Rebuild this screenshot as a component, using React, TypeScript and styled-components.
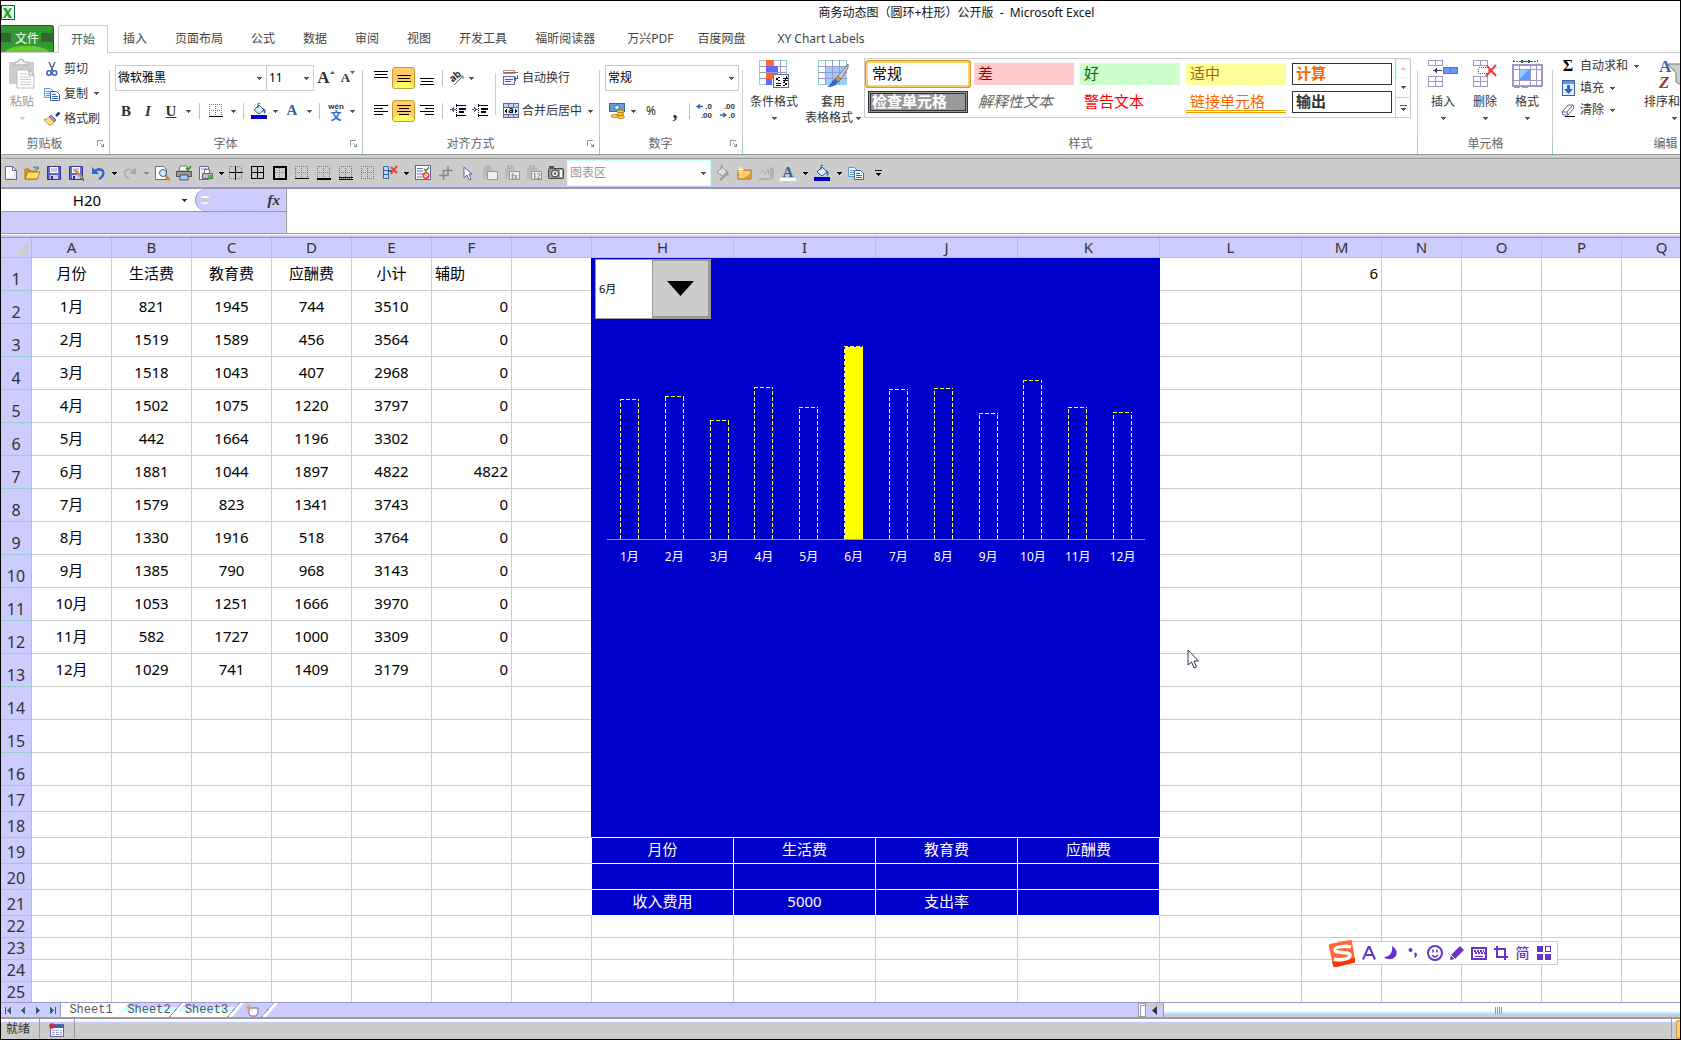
import React from 'react';
import styled, { createGlobalStyle, css } from 'styled-components';

const GlobalStyle = createGlobalStyle`
  *, *::before, *::after { box-sizing: border-box; }
  html, body { margin: 0; padding: 0; }
  body {
    background: #fff;
    font-family: "Noto Sans", "Noto Sans CJK SC", sans-serif;
    font-size: 12px;
    line-height: 16px;
    color: #333;
    overflow: hidden;
  }
  button, input, select, textarea { font: inherit; color: inherit; margin: 0; border-radius: 0; outline: 0; }
  button { background: none; border: 0; padding: 0; white-space: nowrap; cursor: default; }
  svg { display: block; flex: none; overflow: visible; }
`;

/* ---------- window frame ---------- */

const Window = styled.div`
  display: flex;
  flex-direction: column;
  height: 100vh;
  border: 1px solid #000;
  overflow: hidden;
`;

const TitleBar = styled.header`
  flex: none;
  display: grid;
  grid-template-columns: 16px 1fr 16px;
  align-items: center;
  height: 24px;
`;

const Title = styled.h1`
  margin: 0 0 0 232px;
  font-size: 12px;
  font-weight: 400;
  color: #111;
  text-align: center;
  white-space: pre;
`;

const TabStrip = styled.nav`
  flex: none;
  display: flex;
  height: 28px;
  border-bottom: 1px solid #ccc;
`;

const FileTab = styled.button`
  width: 53px;
  margin-right: 4px;
  color: #fff;
  border: 1px solid #063;
  border-width: 1px 1px 0 0;
  border-radius: 0 3px 0 0;
  background:
    radial-gradient(ellipse 60% 40% at 50% 105%, #6c3 0 70%, transparent 75%),
    linear-gradient(90deg, #363 0 10px, transparent 10px 40px, #363 40px) 0 7px / 100% 9px no-repeat,
    #393;
`;

const RibbonTab = styled.button<{ $active?: boolean; $latin?: boolean }>`
  padding: ${p => (p.$latin ? '0 10px 0 18px' : '0 14px')};
  color: #444;
  ${p => p.$active && css`
    height: 28px;
    padding: 0 12px;
    margin-right: 1px;
    border: 1px solid #ccc;
    border-bottom: 0;
    border-radius: 3px 3px 0 0;
    background: #fff;
    color: #366;
  `}
`;

/* ---------- ribbon ---------- */

const Ribbon = styled.div`
  flex: none;
  display: flex;
  height: 101px;
  overflow: hidden;
`;

const Group = styled.section<{ $w: number }>`
  flex: none;
  display: flex;
  flex-direction: column;
  width: ${p => p.$w}px;
  background: linear-gradient(#ccc 60px, #9cc) right bottom / 1px 84px no-repeat;
`;

const GroupBody = styled.div<{ $left?: number }>`
  flex: 1;
  display: flex;
  align-items: flex-start;
  padding-left: ${p => p.$left ?? 0}px;
`;

const GroupFooter = styled.div`
  display: flex;
  align-items: center;
  height: 20px;
  color: #666;
`;

const GroupName = styled.span`
  flex: 1;
  text-align: center;
`;

const Launcher = styled.button`
  width: 22px;
  padding-left: 9px;
`;

const Rows = styled.div<{ $w?: number; $left?: number }>`
  display: flex;
  flex-direction: column;
  gap: 7px;
  padding-top: 12px;
  padding-left: ${p => p.$left ?? 0}px;
  width: ${p => (p.$w ? p.$w + 'px' : 'auto')};
`;

const Row = styled.div`
  display: flex;
  align-items: center;
  height: 26px;
`;

const Slot = styled.button<{ $w?: number; $on?: boolean }>`
  flex: none;
  display: flex;
  align-items: center;
  justify-content: center;
  width: ${p => p.$w ?? 22}px;
  height: 22px;
  ${p => p.$on && css`
    border: 1px solid #c93;
    border-radius: 3px;
    background: radial-gradient(ellipse 60% 40% at 50% 100%, #ff6 0 70%, #fc6 100%);
  `}
`;

const Serif = styled.span<{ $size: number; $color?: string }>`
  font-family: "Liberation Serif", serif;
  font-size: ${p => p.$size}px;
  font-weight: 700;
  color: ${p => p.$color ?? '#333'};
`;

const Divider = styled.span<{ $w: number }>`
  flex: none;
  width: ${p => p.$w}px;
  height: 16px;
  background: linear-gradient(#ccc, #9cc) center / 1px 100% no-repeat;
`;

const TallDivider = styled.span`
  flex: none;
  align-self: center;
  width: 1px;
  height: 42px;
  background: #ccc;
`;

const LabelButton = styled.button`
  display: flex;
  align-items: center;
  gap: 3px;
`;

const MenuMark = styled.span`
  padding-left: 3px;
`;

const BigButton = styled.button<{ $w: number; $muted?: boolean }>`
  flex: none;
  display: flex;
  flex-direction: column;
  align-items: center;
  width: ${p => p.$w}px;
  padding-top: 6px;
  color: ${p => (p.$muted ? '#999' : '#333')};
`;

const BigLabel = styled.span`
  margin-top: 5px;
  height: 16px;
`;

const BigFoot = styled.span`
  display: flex;
  align-items: center;
  gap: 3px;
  height: 16px;
`;

const Commands = styled.div<{ $row: number; $top: number; $w?: number }>`
  display: flex;
  flex-direction: column;
  padding-top: ${p => p.$top}px;
  width: ${p => (p.$w ? p.$w + 'px' : 'auto')};
  ${LabelButton} { height: ${p => p.$row}px; }
`;

const IconCell = styled.span`
  display: flex;
  justify-content: center;
  width: 18px;
`;

const Combo = styled.label<{ $w: number; $flat?: boolean }>`
  display: grid;
  flex: none;
  align-items: center;
  width: ${p => p.$w}px;
  height: 26px;
  border: 1px solid ${p => (p.$flat ? '#cff' : '#ccc')};
  background: #fff;
  color: ${p => (p.$flat ? '#999' : '#000')};
  & + & { border-left: 0; }
  > * { grid-area: 1 / 1; }
  > svg { justify-self: end; margin-right: 4px; pointer-events: none; }
`;

const ComboSelect = styled.select`
  width: 100%;
  height: 100%;
  padding: 0 2px;
  border: 0;
  background: transparent;
  appearance: none;
`;

const Gallery = styled.div`
  display: flex;
  height: 60px;
  margin: 5px 0 0 3px;
  border: 1px solid #ccc;
`;

const Chips = styled.div`
  display: grid;
  grid-template-columns: repeat(5, 100px);
  grid-auto-rows: 22px;
  gap: 6px;
  padding: 4px 3px;
`;

const Chip = styled.button<{ $bg?: string; $fg?: string; $kind?: string }>`
  padding: 0 4px 3px;
  font-size: 15px;
  line-height: 18px;
  text-align: left;
  background: ${p => p.$bg ?? '#fff'};
  color: ${p => p.$fg ?? '#000'};
  ${p => p.$kind === 'selected' && css`
    border-radius: 1px;
    box-shadow: 0 0 0 2px #fc6, 0 0 0 3px #c93;
  `}
  ${p => p.$kind === 'check' && css`
    padding: 0 1px 3px;
    border: 3px double #333;
    font-weight: 700;
    line-height: 12px;
  `}
  ${p => p.$kind === 'note' && css`font-style: italic;`}
  ${p => p.$kind === 'link' && css`
    padding-bottom: 0;
    border-bottom: 3px double #f90;
  `}
  ${p => p.$kind === 'boxed' && css`
    padding: 0 3px 3px;
    border: 1px solid #333;
    font-weight: 700;
    line-height: 16px;
  `}
`;

const GallerySteps = styled.div`
  display: grid;
  grid-template-rows: repeat(3, 1fr);
  width: 15px;
  border-left: 1px solid #ccc;
`;

const GalleryStep = styled.button<{ $dim?: boolean }>`
  display: grid;
  place-items: center;
  border: 1px solid ${p => (p.$dim ? '#cff' : 'transparent')};
  border-bottom-color: ${p => (p.$dim ? '#cff' : '#ccc')};
  &:last-child { border-bottom: 0; }
`;

const RibbonEdge = styled.div`
  flex: none;
  height: 5px;
  border: solid #999;
  border-width: 1px 0;
  background: linear-gradient(#ccf 1px, #ccc 1px);
`;

/* ---------- quick access bar ---------- */

const QuickBar = styled.div`
  flex: none;
  display: flex;
  align-items: center;
  height: 30px;
  border-bottom: 2px solid #999;
  background: #ccc;
  box-shadow: inset 0 1px #ccf, inset 0 -1px #ccf;
`;

/* ---------- formula bar ---------- */

const FormulaBar = styled.div`
  flex: none;
  display: grid;
  grid-template-columns: 286px 1fr;
  height: 45px;
  border-bottom: 1px solid #999;
`;

const NameArea = styled.div`
  border-right: 1px solid #999;
  background: #ccf;
`;

const NameRow = styled.div`
  display: flex;
  align-items: center;
  height: 23px;
  border-bottom: 1px solid #999;
  background: #fff;
`;

const NameInput = styled.input`
  width: 172px;
  height: 22px;
  padding: 0;
  border: 0;
  background: transparent;
  font-size: 15px;
  text-align: center;
  color: #000;
`;

const FxArea = styled.div`
  flex: 1;
  display: flex;
  align-items: center;
  justify-content: space-between;
  height: 22px;
  padding: 0 6px 0 5px;
  border-left: 1px solid #999;
  border-radius: 11px 0 0 11px;
  background: #ccf;
`;

const FxKnob = styled.span`
  width: 8px;
  height: 8px;
  border-radius: 2px;
  background: linear-gradient(#fff 2px, #ccc 2px 6px, #eef 6px);
`;

const FxButton = styled.button`
  font-family: "Liberation Serif", serif;
  font-size: 15px;
  font-style: italic;
  font-weight: 700;
`;

const FormulaInput = styled.textarea`
  width: 100%;
  height: 100%;
  padding: 2px 4px;
  border: 0;
  resize: none;
  background: #fff;
  font-size: 15px;
`;

const SheetEdge = styled.div`
  flex: none;
  height: 4px;
  border-top: 1px solid #fff;
  border-bottom: 1px solid #999;
  background: #ccf;
`;

/* ---------- worksheet ---------- */

const SheetPane = styled.main`
  position: relative;
  flex: 1;
  min-height: 0;
  overflow: hidden;
  background: #fff;
`;

const Grid = styled.table`
  width: 1701px;
  table-layout: fixed;
  border-collapse: separate;
  border-spacing: 0;
`;

const ColHead = styled.th`
  height: 20px;
  padding: 0 0 1px;
  border-right: 1px solid #9cc;
  border-bottom: 1px solid #9cc;
  background: #ccf;
  font-size: 15px;
  line-height: 18px;
  font-weight: 400;
`;

const Corner = styled(ColHead)`
  background: linear-gradient(135deg, transparent 50%, #ccc 50%) 15px 5px / 12px 12px no-repeat, #ccf;
`;

const RowHead = styled.th`
  padding: 0 0 1px;
  border-right: 1px solid #9cc;
  border-bottom: 1px solid #9cc;
  background: #ccf;
  vertical-align: bottom;
  font-size: 16px;
  line-height: 20px;
  font-weight: 400;
`;

const Cell = styled.td<{ $h: number; $align: string; $fill: boolean; $below: string; $beside: string }>`
  height: ${p => p.$h}px;
  padding: 0 3px 2px;
  border-right: 1px solid ${p => p.$beside};
  border-bottom: 1px solid ${p => p.$below};
  background: ${p => (p.$fill ? '#00c' : '#fff')};
  color: ${p => (p.$fill ? '#fff' : '#000')};
  font-size: 15px;
  line-height: 19px;
  text-align: ${p => p.$align};
  vertical-align: middle;
  white-space: nowrap;
`;

/* The chart object floats over columns H to K. */
const ChartObject = styled.section`
  position: absolute;
  left: 590px;
  top: 20px;
  width: 569px;
  height: 579px;
  padding-top: 1px;
  background: #00c;
  color: #fff;
`;

const MonthPicker = styled.label`
  display: grid;
  grid-template-columns: 1fr 58px;
  width: 116px;
  height: 60px;
  margin-left: 4px;
  border: 1px solid #999;
  background: #fff;
`;

const MonthSelect = styled.select`
  grid-area: 1 / 1 / 2 / 3;
  padding: 0 3px;
  border: 0;
  background: transparent;
  color: #000;
  font-size: 11px;
  appearance: none;
`;

const MonthArrow = styled.span`
  grid-area: 1 / 2;
  display: grid;
  place-items: center;
  border: 1px solid #999;
  border-right-width: 2px;
  border-bottom-width: 2px;
  background: #ccc;
  pointer-events: none;
`;

const Plot = styled.div`
  display: grid;
  grid-template-columns: repeat(12, 1fr);
  align-items: end;
  justify-items: center;
  height: 221px;
  margin: 0 15px 0 16px;
  border-bottom: 1px solid #999;
`;

const Bar = styled.div<{ $solid: boolean }>`
  width: 19px;
  background:
    ${p => p.$solid && 'linear-gradient(#ff0, #ff0) 1px 1px / 100% 100% no-repeat,'}
    repeating-linear-gradient(90deg, #ff3 0 4px, transparent 4px 6px) 0 0 / 100% 1px no-repeat,
    repeating-linear-gradient(0deg, #ff9 0 4px, transparent 4px 6px) 0 0 / 1px 100% no-repeat,
    repeating-linear-gradient(0deg, #ff6 0 4px, transparent 4px 6px) 100% 0 / 1px 100% no-repeat;
`;

const PlotLabels = styled.div`
  display: grid;
  grid-template-columns: repeat(12, 1fr);
  margin: 8px 15px 0 16px;
  line-height: 18px;
  text-align: center;
`;

const ImeBar = styled.div`
  position: absolute;
  right: 122px;
  bottom: 37px;
  display: flex;
  align-items: center;
  height: 24px;
  padding-right: 2px;
  border: 1px solid #ccc;
  background: #fff;
  color: #63c;
`;

const ImeLogo = styled.span`
  margin: 0 2px 0 -11px;
`;

const ImeText = styled.span`
  font-size: 14px;
  font-weight: 500;
`;

const Pointer = styled.span`
  position: absolute;
  left: 1186px;
  top: 411px;
`;

/* ---------- sheet tabs and status ---------- */

const BottomBar = styled.div`
  flex: none;
  display: grid;
  grid-template-columns: minmax(0, 1fr) 542px;
  height: 16px;
  border-top: 1px solid #99c;
  border-bottom: 1px solid #99c;
  background: #ccf;
`;

const SheetTabs = styled.div`
  display: flex;
`;

const SheetNav = styled.div`
  display: flex;
  align-items: center;
  width: 60px;
  border-right: 1px solid #99c;
`;

const NavButton = styled.button`
  display: grid;
  place-items: center;
  width: 15px;
`;

const slantedEdge = `linear-gradient(131deg,
  transparent calc(100% - 13px),
  #99c calc(100% - 13px) calc(100% - 12px),
  #fff calc(100% - 12px))`;

const SheetTab = styled.button<{ $active?: boolean; $w: number }>`
  flex: none;
  width: ${p => p.$w}px;
  height: 14px;
  padding: ${p => (p.$active ? '1px 8px 0 0' : '1px 5px 0 0')};
  margin-left: ${p => (p.$active ? 0 : -12)}px;
  clip-path: ${p => p.$active
    ? 'polygon(0 0, 100% 0, calc(100% - 12px) 100%, 0 100%)'
    : 'polygon(12px 0, 100% 0, calc(100% - 12px) 100%, 0 100%)'};
  background: ${p => p.$active
    ? '#fff'
    : `${slantedEdge}, linear-gradient(#ccf 4px, #cff 4px 8px, #fff 9px)`};
  font-family: "Liberation Mono", monospace;
  font-size: 12px;
  line-height: 13px;
  color: #555;
`;

const NewTab = styled.button`
  display: flex;
  align-items: center;
  justify-content: center;
  width: 46px;
  margin-left: -12px;
  padding-right: 6px;
  clip-path: polygon(12px 0, 100% 0, calc(100% - 12px) 100%, 0 100%);
  background: ${slantedEdge};
`;

const HScroll = styled.div`
  display: flex;
`;

const Splitter = styled.span`
  width: 8px;
  border: 1px solid #999;
  background: #fff;
  box-shadow: inset 1px 1px #fff, inset 2px 2px #99c;
`;

const ScrollArrow = styled.button`
  display: grid;
  place-items: center;
  width: 17px;
  background: linear-gradient(#ccc 4px, #ccf 4px);
`;

const ScrollThumb = styled.div`
  flex: 1;
  display: flex;
  align-items: center;
  justify-content: flex-end;
  padding-right: 178px;
  border-left: 1px solid #999;
  background: linear-gradient(#fff 8px, #cff 8px 10px, #ccf 10px 12px, #ccc 12px);
`;

const ScrollGrip = styled.span`
  width: 7px;
  height: 7px;
  background: repeating-linear-gradient(90deg, #999 0 1px, transparent 1px 2px);
`;

const StatusBar = styled.footer`
  flex: none;
  display: flex;
  align-items: stretch;
  height: 21px;
  border-top: 1px solid #999;
  background: linear-gradient(#fff 2px, #cff 2px 3px, #ccf 3px 4px, #ccc 4px);
`;

const StatusText = styled.span`
  padding: 2px 9px 0 5px;
  border-right: 1px solid #999;
`;

const StatusButton = styled.button`
  padding: 2px 9px 0;
  border-right: 1px solid #999;
`;

const StatusEnd = styled.div`
  display: flex;
  margin-left: auto;
  border-left: 1px solid #999;
  padding: 1px 0 0 4px;
`;

const ViewButton = styled.button`
  width: 4px;
  border: solid #c93;
  border-width: 1px 0 1px 1px;
  border-radius: 3px 0 0 3px;
  background: #fc6;
`;

/* ---------- icons ---------- */

type IconProps = { w?: number; h?: number; sharp?: boolean; children: React.ReactNode };
const Icon = ({ w = 16, h = 16, sharp, children }: IconProps) => (
  <svg width={w} height={h} viewBox={`0 0 ${w} ${h}`} fill="none" aria-hidden="true"
    shapeRendering={sharp ? 'crispEdges' : undefined}>{children}</svg>
);

const Caret = ({ color = '#555' }: { color?: string }) => (
  <Icon w={5} h={3} sharp><path d="M0 0h5v1H4v1H3v1H2V2H1V1H0z" fill={color} /></Icon>
);

const ExcelIcon = () => (
  <Icon w={15} h={16}>
    <rect x="0.5" y="0.5" width="13" height="14" fill="#efe" stroke="#063" />
    <rect x="2" y="2" width="9" height="11" fill="#cfc" />
    <path d="M2 3h3l2 3 2-3h2L8 8l3 5H8L6 10l-2 3H2l3-5z" fill="#393" />
  </Icon>
);

const LauncherIcon = () => (
  <Icon w={8} h={8} sharp>
    <path d="M0 6V0h6v1H1v5z" fill="#999" />
    <path d="M7 3v4H3z" fill="#888" />
    <path d="M3 3l3 3" stroke="#999" />
  </Icon>
);

const PasteIcon = () => (
  <Icon w={28} h={30}>
    <path d="M1 3h25v22H1z" fill="#ccc" />
    <path d="M7 6V3h3a3 3 0 0 1 6 0h4v3z" fill="#eee" stroke="#aaa" />
    <path d="M9 11h12l5 5v13H9z" fill="#fff" stroke="#bbb" />
    <path d="M21 11v5h5" stroke="#999" />
    <path d="M12 15h7M12 18h11M12 20.500h11M12 23h11M12 25.500h11" stroke="#ccc" />
  </Icon>
);

const CutIcon = () => (
  <Icon>
    <path d="M5 1l4 9M11 1L7 10" stroke="#669" strokeWidth="1.600" />
    <circle cx="5" cy="12" r="2.200" stroke="#36c" strokeWidth="1.600" />
    <circle cx="10.500" cy="12" r="2.200" stroke="#36c" strokeWidth="1.600" />
  </Icon>
);

const CopyIcon = () => (
  <Icon>
    <path d="M.5 2.500h6l3 3v6h-9z" fill="#eef" stroke="#69c" />
    <path d="M2 5.500h4M2 7.500h5M2 9.500h4" stroke="#69c" />
    <path d="M6.500 5.500h6l3 3v6h-9z" fill="#fff" stroke="#36a" />
    <path d="M8 8.500h4M8 10.500h6M8 12.500h6" stroke="#36c" />
  </Icon>
);

const BrushIcon = () => (
  <Icon>
    <path d="M15.500 1.500L12 5" stroke="#339" strokeWidth="2.500" />
    <path d="M7 4l5 5-2 2-5-5z" fill="#99c" stroke="#446" strokeWidth=".8" />
    <path d="M5 6l5 5c-1 2-3 3-5 3C3 12 1 11 0 8c2 1 4 0 5-2z" fill="#fd8" stroke="#a83" strokeWidth=".8" />
  </Icon>
);

type LinesProps = { rows: number[][]; h?: number };
const Lines = ({ rows, h = 14 }: LinesProps) => (
  <Icon w={14} h={h} sharp>
    {rows.map(([x, y, w]) => <rect key={y} x={x} y={y} width={w} height="1" fill="#000" />)}
  </Icon>
);

const IndentIcon = ({ out }: { out?: boolean }) => (
  <Icon w={16} h={14} sharp>
    <path d="M6 1h10v1H6zM9 4h7v2H9zM9 7h5v2H9zM6 11h10v1H6z" fill="#000" />
    <path d="M6.500 0v14" stroke="#000" strokeDasharray="1 1" />
    <path d={out ? 'M4 3v5L0 5.500zM4 5h2v1H4z' : 'M2 3v5l4-2.500zM0 5h3v1H0z'} fill="#36a" />
  </Icon>
);

const BorderIcon = ({ kind }: { kind: string }) => (
  <Icon w={14} h={14} sharp>
    {kind !== 'all' && <path d="M.5 0v14M6.500 0v14M12.500 0v14M0 .5h14M0 6.500h14M0 12.500h14" stroke="#777" strokeDasharray="1 1" />}
    {kind === 'inner' && <path d="M6 0h1v14H6zM0 6h14v1H0z" fill="#000" />}
    {kind === 'all' && <path d="M.5.5h12v12H.5zM6.500 0v13M0 6.500h13" stroke="#000" />}
    {kind === 'thick' && <rect x="1" y="1" width="12" height="12" stroke="#000" strokeWidth="2" />}
    {kind === 'bottom' && <path d="M0 12h14v1H0z" fill="#000" />}
    {kind === 'thickBottom' && <path d="M0 12h14v2H0z" fill="#000" />}
    {kind === 'double' && <path d="M0 11h14v1H0zM0 13h14v1H0z" fill="#000" />}
  </Icon>
);

const FillIcon = ({ dim }: { dim?: boolean }) => (
  <Icon>
    <path d="M3 7l5-5 5 5-5 4z" fill={dim ? '#ddd' : '#def'} stroke={dim ? '#999' : '#357'} />
    <path d="M7 5V1c0-1 2-1 2 0" stroke={dim ? '#999' : '#357'} />
    <path d="M12 5c3 1 3 4 2 6-2-1-1-3-2-6z" fill={dim ? '#999' : '#36c'} />
    {dim ? <path d="M6 15l8-7" stroke="#999" strokeWidth="2" /> : <rect y="12" width="16" height="4" fill="#00c" />}
  </Icon>
);

const FontColorMark = ({ bar }: { bar?: boolean }) => (
  <Icon>
    <text x="8" y="12" textAnchor="middle" fontFamily="Liberation Serif, serif" fontWeight="700" fontSize="15" fill="#369">A</text>
    {bar && <rect y="13" width="16" height="3" fill="#fff" />}
  </Icon>
);

const PhoneticIcon = () => (
  <Icon w={17} h={17}>
    <text x="8" y="6" textAnchor="middle" fontFamily="Liberation Sans, sans-serif" fontSize="8" fontWeight="700" fill="#333">wén</text>
    <text x="8" y="17" textAnchor="middle" fontFamily="Noto Sans CJK SC, sans-serif" fontSize="11" fontWeight="700" fill="#36c">文</text>
  </Icon>
);

const OrientationIcon = () => (
  <Icon>
    <text x="1" y="10" transform="rotate(-40 6 8)" fontFamily="Noto Sans, sans-serif" fontSize="10" fontWeight="700" fill="#333">ab</text>
    <path d="M5 15L14 6M14 9V6h-3" stroke="#666" />
  </Icon>
);

const WrapIcon = () => (
  <Icon sharp>
    <path d="M.5.5h11v3H.5z" fill="#fff" stroke="#99c" />
    <path d="M1 2h14v1H1z" fill="#a63" />
    <path d="M.5 6.500h11v8H.5z" fill="#eef" stroke="#669" />
    <path d="M2 9h8v1H2zM2 11h6v1H2z" fill="#36a" />
    <path d="M15 5v4h-2v2l-3-2 3-2v1h1V5z" fill="#36a" />
  </Icon>
);

const MergeIcon = () => (
  <Icon sharp>
    <path d="M.5.5h15v14H.5zM0 4.500h16M0 11.500h16M5.500 0v4M10.500 0v4M5.500 12v3M10.500 12v3" fill="#ccf" stroke="#669" />
    <rect x="1" y="5" width="14" height="6" fill="#cff" />
    <path d="M1 8l3-2v4zM15 8l-3-2v4z" fill="#000" />
    <text x="8" y="10" textAnchor="middle" fontFamily="Noto Sans, sans-serif" fontSize="9" fontWeight="700" fill="#000">a</text>
  </Icon>
);

const CurrencyIcon = () => (
  <Icon>
    <rect x=".5" y=".5" width="15" height="8" fill="#69c" stroke="#36a" />
    <circle cx="8" cy="4.500" r="2.500" fill="#cef" stroke="#369" />
    <ellipse cx="11.500" cy="8.500" rx="3.500" ry="1.600" fill="#fc3" stroke="#a60" strokeWidth=".7" />
    <ellipse cx="11.500" cy="11" rx="3.500" ry="1.600" fill="#fc3" stroke="#a60" strokeWidth=".7" />
    <ellipse cx="5.500" cy="13" rx="3.500" ry="1.600" fill="#fc3" stroke="#a60" strokeWidth=".7" />
    <ellipse cx="12" cy="14" rx="3.500" ry="1.600" fill="#fc3" stroke="#a60" strokeWidth=".7" />
  </Icon>
);

const DecimalIcon = ({ less }: { less?: boolean }) => (
  <Icon>
    <text x="15" y="6" textAnchor="end" fontFamily="Liberation Sans, sans-serif" fontSize="8" fontWeight="700" fill="#333">{less ? '.00' : '.0'}</text>
    <text x="15" y="15" textAnchor="end" fontFamily="Liberation Sans, sans-serif" fontSize="8" fontWeight="700" fill="#333">{less ? '.0' : '.00'}</text>
    <path d={less ? 'M6 12H0M3 10l3 2-3 2' : 'M0 3.500h6M3 1.500L0 3.500l3 2'} stroke="#36a" strokeWidth="1.300" />
  </Icon>
);

const ConditionalIcon = () => (
  <Icon w={31} h={30} sharp>
    <path d="M.5 1.500h27v24H.5z" fill="#fff" stroke="#9cc" />
    <path d="M7.500 1v25M14.500 1v25M21.500 1v25M0 7.500h28M0 13.500h28M0 19.500h28" stroke="#99c" />
    <path d="M7 1h7v6H7zM7 14h12v6H7z" fill="#f63" />
    <path d="M7 7h12v6H7zM7 20h6v6H7z" fill="#66f" />
    <path d="M14.500 15.500h15v13h-15z" fill="#fff" stroke="#669" />
    <path d="M21 18l-4 2 4 2M17 24h5M17 26h5M24 19h5M24 21h5M28 17l-3 6M24 23l4 2-4 2" stroke="#000" />
  </Icon>
);

const FormatTableIcon = () => (
  <Icon w={31} h={30}>
    <path d="M.5 1.500h28v24H.5z" fill="#fff" stroke="#9cc" shapeRendering="crispEdges" />
    <path d="M8 8h21v18H8z" fill="#9cf" />
    <path d="M7.500 1v25M14.500 1v25M21.500 1v25M0 7.500h29M0 13.500h29M0 19.500h29" stroke="#99c" shapeRendering="crispEdges" />
    <path d="M30 5L20 17l3 3 7-11z" fill="#ccc" stroke="#777" />
    <path d="M20 17l3 3-3 3-3-3z" fill="#c93" stroke="#963" />
    <path d="M17 20l3 3c-2 4-6 5-11 5 3-1 4-6 8-8z" fill="#36c" />
  </Icon>
);

const InsertIcon = () => (
  <Icon w={31} h={30} sharp>
    <path d="M.5 1.500h14v5H.5zM7.500 1v6M.5 17.500h14v10H.5zM7.500 17v11M0 22.500h15" fill="#fff" stroke="#99c" />
    <path d="M15.500 8.500h14v6h-14z" fill="#69f" stroke="#66c" />
    <path d="M22.500 8v7" stroke="#66c" />
    <path d="M6 11h8v1H6zM9 9v5l-4-2.500z" fill="#336" />
  </Icon>
);

const DeleteIcon = () => (
  <Icon w={25} h={30}>
    <path d="M.5 1.500h14v5H.5zM7.500 1v6M.5 17.500h14v10H.5zM7.500 17v11M0 22.500h15" fill="#fff" stroke="#99c" shapeRendering="crispEdges" />
    <path d="M5.500 8.500h10v6h-10z" stroke="#369" strokeDasharray="1 1" shapeRendering="crispEdges" />
    <path d="M14 7l9 10M23 6l-10 11" stroke="#f33" strokeWidth="2" />
  </Icon>
);

const FormatIcon = () => (
  <Icon w={31} h={30} sharp>
    <path d="M1 2.500h25M1 1v3M25 1v3" stroke="#366" strokeDasharray="2 1" />
    <path d="M8 2.500h10M11 1L8 2.500 11 4M16 1l3 1.500L16 4" stroke="#366" />
    <path d="M.5 5.500h29v21H.5z" fill="#fff" stroke="#99c" strokeWidth="2" />
    <path d="M7.500 5v22M18.500 5v22M24.500 5v22M0 10.500h30M0 21.500h30" stroke="#99c" />
    <path d="M8 11h10v10H8z" fill="#69f" />
    <path d="M8 11h9L8 19z" fill="#9cf" />
    <path d="M2 28h6M10 28h6" stroke="#99c" />
  </Icon>
);

const FillDownIcon = () => (
  <Icon w={13} h={16}>
    <rect x=".5" y=".5" width="12" height="15" fill="#def" stroke="#36a" />
    <rect x="1" y="1" width="11" height="3" fill="#69c" />
    <path d="M5 5h3v4h3l-4.500 5L2 9h3z" fill="#36c" />
  </Icon>
);

const EraserIcon = () => (
  <Icon w={14} h={14}>
    <path d="M1 9l6-7h5l1 3-6 7H2z" fill="#fff" stroke="#669" />
    <path d="M1 9h5l6-7M6 9l1 3" stroke="#669" />
    <path d="M4 13.500h10" stroke="#000" />
  </Icon>
);

const SortIcon = () => (
  <Icon w={31} h={30}>
    <text x="0" y="13" fontFamily="Liberation Serif, serif" fontSize="17" fontWeight="700" fill="#36a">A</text>
    <text x="0" y="29" fontFamily="Liberation Serif, serif" fontSize="17" fontWeight="700" fontStyle="italic" fill="#933">Z</text>
    <path d="M9 5h21l-8 9v12l-5-3v-9z" fill="#ccc" stroke="#777" />
  </Icon>
);

const NewIcon = () => (
  <Icon w={12} h={14}><path d="M.5.5h7l4 4v9H.5z" fill="#fff" stroke="#668" /><path d="M7.500.5v4h4" stroke="#668" /><path d="M10 6v6H2" stroke="#cce" /></Icon>
);
const OpenIcon = () => (
  <Icon><path d="M1 14V4h4l1 2h7v8z" fill="#e90" stroke="#a60" strokeWidth=".8" /><path d="M1 14l3-7h12l-3 7z" fill="#fd6" stroke="#a60" strokeWidth=".8" /><path d="M9 3c2-2 4-1 5 1M14 1v3h-3" stroke="#36a" /></Icon>
);
const SaveIcon = ({ pen }: { pen?: boolean }) => (
  <Icon><path d="M1.500 1.500h13v13h-13z" fill="#66c" stroke="#339" /><rect x="4" y="2" width="8" height="6" fill="#fff" /><path d="M5 4h6M5 6h6" stroke="#99c" /><rect x="4" y="10" width="8" height="4" fill="#ccf" /><rect x="5" y="11" width="2" height="3" fill="#339" />{pen && <path d="M7 5l8 9" stroke="#c93" strokeWidth="2.500" />}{pen && <path d="M14 13l2 3" stroke="#333" />}</Icon>
);
const UndoIcon = ({ redo }: { redo?: boolean }) => (
  <Icon><g transform={redo ? 'translate(16 0) scale(-1 1)' : undefined}><path d="M4 7c5-5 11-2 9 3-1 2-2 3-4 4" stroke={redo ? '#aaa' : '#36c'} strokeWidth={redo ? 1.5 : 2.5} /><path d="M2 2v7h7z" fill={redo ? '#aaa' : '#36c'} /></g></Icon>
);
const PreviewIcon = () => (
  <Icon><path d="M1.500 1.500h8l3 3v10h-11z" fill="#fff" stroke="#669" /><circle cx="9" cy="8" r="3.500" fill="#cef" stroke="#555" /><path d="M11.500 11l4 4" stroke="#c83" strokeWidth="2.500" /></Icon>
);
const PrinterIcon = () => (
  <Icon><path d="M4 1h7l1 5H3z" fill="#fff" stroke="#777" /><rect x=".5" y="6.500" width="15" height="5" fill="#999" stroke="#555" /><path d="M4 10h8v5H4z" fill="#9cf" stroke="#555" /><path d="M10 3l2 2 3-4" stroke="#393" strokeWidth="1.800" /></Icon>
);
const PagePrintIcon = () => (
  <Icon><path d="M1.500 1.500h9v13h-9z" fill="#eef" stroke="#669" /><path d="M3 4h6M3 12h2" stroke="#99c" /><path d="M7 4l5 1-1 4H6z" fill="#fff" stroke="#666" /><path d="M4.500 8.500h10v5h-10z" fill="#bbc" stroke="#666" /><path d="M10 10h4v3h-4z" fill="#3c3" /></Icon>
);
const DeleteRowIcon = () => (
  <Icon><path d="M1.500 1.500h5v4h-5zM1.500 5.500h5v4h-5zM1.500 9.500h5v4h-5z" fill="#ccf" stroke="#369" /><path d="M6 6h4" stroke="#369" strokeWidth="2" /><path d="M9 2l6 6M15 1L9 9" stroke="#f33" strokeWidth="2" /></Icon>
);
const ChecklistIcon = () => (
  <Icon><rect x=".5" y=".5" width="15" height="14" fill="#fff" stroke="#669" /><path d="M2 3.500h6M2 6h6M2 9h6M2 12h5" stroke="#66c" /><path d="M9 4l2 2 3-4" stroke="#393" strokeWidth="1.500" /><circle cx="11" cy="10.500" r="2.800" stroke="#f33" strokeWidth="1.500" /><path d="M9 9l4 3" stroke="#f33" /></Icon>
);
const CropGrayIcon = () => (
  <Icon w={14} h={14}><path d="M0 9.500h9V0M4.500 14V4.500H14" stroke="#888" strokeWidth="1.500" /></Icon>
);
const SelectIcon = () => (
  <Icon w={10} h={15}><path d="M1 1v11l3-3 2 5 2-1-2-5h3z" fill="#fff" stroke="#669" /></Icon>
);
const ClipIcon = ({ mark }: { mark: string }) => (
  <Icon><path d="M1 3h10v3H6v8H1z" fill="#bbb" /><path d="M4 3V1h4v2z" fill="#eee" stroke="#999" /><rect x="5.500" y="6.500" width="10" height="8" fill="#eee" stroke="#999" />{mark && <text x="10.500" y="13.500" textAnchor="middle" fontFamily="Liberation Serif, serif" fontSize="8" fontWeight="700" fill="#888">{mark}</text>}</Icon>
);
const CameraIcon = () => (
  <Icon><rect x=".5" y="3.500" width="15" height="10" rx="1" fill="#999" stroke="#444" /><rect x="1" y="1" width="5" height="3" fill="#555" /><circle cx="7" cy="8.500" r="3.500" fill="#eee" stroke="#333" /><circle cx="7" cy="8.500" r="1.300" fill="#366" /><rect x="12" y="5" width="2" height="7" fill="#fff" /></Icon>
);
const FolderIcon = () => (
  <Icon><path d="M2 5h13v9H2z" fill="#fc6" stroke="#963" /><path d="M15 8v6H7z" fill="#c93" /><path d="M4 1v7M1 4.500h7M2 2l5 5M7 2L2 7" stroke="#ff6" /></Icon>
);
const SignatureIcon = () => (
  <Icon><path d="M1 14h12V3l2 2v9" stroke="#aaa" strokeWidth="1.500" /><path d="M2 8l3-3 2 4 3-5 1 6" stroke="#aaa" /></Icon>
);
const MoreIcon = ({ color = '#000' }: { color?: string }) => (
  <Icon w={7} h={6} sharp><path d="M0 0h7v1H0zM1 3h5v1H5v1H4v1H3V5H2V4H1z" fill={color} /></Icon>
);

const SogouLogo = () => (
  <Icon w={28} h={28}>
    <path d="M2 5L22 1c1 0 2 0 2 2l3 18c0 2 0 3-2 3L8 28c-2 0-3 0-3-2L1 8c0-2 0-3 1-3z" fill="#f63" />
    <path d="M4 23l23-4v3c0 2-1 2-2 2L8 28c-2 0-3 0-3-2z" fill="#f30" />
    <path d="M23 8c-6-2-16 0-16 3 0 4 15 1 15 5.500C22 20 12 22 6 20" stroke="#fff" strokeWidth="3.500" />
  </Icon>
);

/* ---------- data ---------- */

const TABS = ['插入', '页面布局', '公式', '数据', '审阅', '视图', '开发工具', '福昕阅读器', '万兴PDF', '百度网盘', 'XY Chart Labels'];

const STYLES = [
  { name: '常规', kind: 'selected' },
  { name: '差', bg: '#fcc', fg: '#900' },
  { name: '好', bg: '#cfc', fg: '#060' },
  { name: '适中', bg: '#ff9', fg: '#960' },
  { name: '计算', fg: '#f60', kind: 'boxed' },
  { name: '检查单元格', bg: '#999', fg: '#fff', kind: 'check' },
  { name: '解释性文本', fg: '#666', kind: 'note' },
  { name: '警告文本', fg: '#f00' },
  { name: '链接单元格', fg: '#f60', kind: 'link' },
  { name: '输出', fg: '#333', kind: 'boxed' },
];

const COLUMNS = 'ABCDEFGHIJKLMNOPQ'.split('');
const isWide = (c: string) => 'HIJKL'.includes(c);

const MONTHS: [number, number, number][] = [
  [821, 1945, 744], [1519, 1589, 456], [1518, 1043, 407], [1502, 1075, 1220],
  [442, 1664, 1196], [1881, 1044, 1897], [1579, 823, 1341], [1330, 1916, 518],
  [1385, 790, 968], [1053, 1251, 1666], [582, 1727, 1000], [1029, 741, 1409],
];
const TOTALS = MONTHS.map(m => m[0] + m[1] + m[2]);
const PICKED = 6;

const VALUES: Record<string, string | number> = {
  A1: '月份', B1: '生活费', C1: '教育费', D1: '应酬费', E1: '小计', F1: '辅助', M1: PICKED,
  H19: '月份', I19: '生活费', J19: '教育费', K19: '应酬费',
  H21: '收入费用', I21: 5000, J21: '支出率',
};
MONTHS.forEach(([life, study, social], i) => {
  const r = i + 2;
  Object.assign(VALUES, {
    ['A' + r]: `${i + 1}月`, ['B' + r]: life, ['C' + r]: study, ['D' + r]: social,
    ['E' + r]: TOTALS[i], ['F' + r]: i + 1 === PICKED ? TOTALS[i] : 0,
  });
});

const rowHeight = (r: number) => (r <= 16 ? 33 : r <= 21 ? 26 : 22);
const ROWS = Array.from({ length: 25 }, (_, i) => i + 1);

const alignOf = (c: string, r: number) => {
  if (c === 'M') return 'right';
  if (c === 'F') return r === 1 ? 'left' : 'right';
  return 'center';
};

/* Rows 19 to 21 of H:K are a white-ruled table on blue. */
const inTable = (r: number) => r >= 19 && r <= 21;
const inPanel = (c: string) => 'HIJK'.includes(c);

/* ---------- parts ---------- */

const RibbonGroup = ({ name, w, left, launcher, children }:
  { name: string; w: number; left?: number; launcher?: boolean; children: React.ReactNode }) => (
  <Group $w={w}>
    <GroupBody $left={left}>{children}</GroupBody>
    <GroupFooter>
      <GroupName>{name}</GroupName>
      {launcher && <Launcher aria-label={name}><LauncherIcon /></Launcher>}
    </GroupFooter>
  </Group>
);

const CaretSlot = ({ w = 10, color }: { w?: number; color?: string }) => (
  <Slot $w={w} aria-label="更多"><Caret color={color} /></Slot>
);

const ComboBox = ({ label, value, w, flat }: { label: string; value: string; w: number; flat?: boolean }) => (
  <Combo $w={w} $flat={flat}>
    <ComboSelect aria-label={label}><option>{value}</option></ComboSelect>
    <Caret />
  </Combo>
);

const Command = ({ label, icon, menu }: { label: string; icon: React.ReactNode; menu?: boolean }) => (
  <LabelButton>
    <IconCell>{icon}</IconCell>
    {label}
    {menu && <MenuMark><Caret /></MenuMark>}
  </LabelButton>
);

const Big = ({ w, label, second, muted, icon }:
  { w: number; label: string; second?: string; muted?: boolean; icon: React.ReactNode }) => (
  <BigButton $w={w} $muted={muted}>
    {icon}
    <BigLabel>{label}</BigLabel>
    <BigFoot>{second}<Caret color={muted ? '#ccc' : '#555'} /></BigFoot>
  </BigButton>
);

const RibbonView = () => (
  <Ribbon>
    <RibbonGroup name="剪贴板" w={109} launcher>
      <Big w={42} label="粘贴" muted icon={<PasteIcon />} />
      <Commands $row={25} $top={3}>
        <Command label="剪切" icon={<CutIcon />} />
        <Command label="复制" icon={<CopyIcon />} menu />
        <Command label="格式刷" icon={<BrushIcon />} />
      </Commands>
    </RibbonGroup>

    <RibbonGroup name="字体" w={253} left={5} launcher>
      <Rows>
        <Row>
          <ComboBox label="字体" value="微软雅黑" w={152} />
          <ComboBox label="字号" value="11" w={47} />
          <Slot $w={24} aria-label="增大字号">
            <Serif $size={17}>A</Serif><Icon w={5} h={14}><path d="M0 3l2.500-3L5 3z" fill="#36a" /></Icon>
          </Slot>
          <Slot $w={20} aria-label="减小字号">
            <Serif $size={13}>A</Serif><Icon w={5} h={14}><path d="M0 0h5L2.500 3z" fill="#36a" /></Icon>
          </Slot>
        </Row>
        <Row>
          <Slot aria-label="加粗"><Serif $size={15}>B</Serif></Slot>
          <Slot aria-label="倾斜"><Serif as="i" $size={15}>I</Serif></Slot>
          <Slot $w={24} aria-label="下划线"><Serif as="u" $size={15}>U</Serif></Slot>
          <CaretSlot />
          <Divider $w={12} />
          <Slot aria-label="边框"><BorderIcon kind="bottom" /></Slot>
          <CaretSlot w={12} />
          <Divider $w={8} />
          <Slot $w={24} aria-label="填充颜色"><FillIcon /></Slot>
          <CaretSlot w={8} />
          <Slot $w={26} aria-label="字体颜色"><FontColorMark /></Slot>
          <CaretSlot w={8} />
          <Divider $w={12} />
          <Slot aria-label="拼音"><PhoneticIcon /></Slot>
          <CaretSlot />
        </Row>
      </Rows>
    </RibbonGroup>

    <RibbonGroup name="对齐方式" w={237} launcher>
      <Rows $w={132} $left={6}>
        <Row>
          <Slot $w={23} aria-label="顶端对齐"><Lines rows={[[0, 0, 14], [1, 3, 12], [0, 6, 14]]} /></Slot>
          <Slot $w={23} $on aria-label="垂直居中"><Lines rows={[[0, 4, 14], [1, 7, 12], [0, 10, 14]]} /></Slot>
          <Slot $w={23} aria-label="底端对齐"><Lines rows={[[0, 7, 14], [1, 10, 12], [0, 13, 14]]} /></Slot>
          <Divider $w={9} />
          <Slot $w={20} aria-label="方向"><OrientationIcon /></Slot>
          <CaretSlot w={8} />
        </Row>
        <Row>
          <Slot $w={23} aria-label="左对齐"><Lines rows={[[0, 1, 14], [0, 4, 9], [0, 7, 14], [0, 10, 9]]} /></Slot>
          <Slot $w={23} $on aria-label="居中"><Lines rows={[[0, 1, 14], [2, 4, 10], [0, 7, 14], [2, 10, 10]]} /></Slot>
          <Slot $w={23} aria-label="右对齐"><Lines rows={[[0, 1, 14], [5, 4, 9], [0, 7, 14], [5, 10, 9]]} /></Slot>
          <Divider $w={9} />
          <Slot aria-label="减少缩进量"><IndentIcon out /></Slot>
          <Slot aria-label="增加缩进量"><IndentIcon /></Slot>
        </Row>
      </Rows>
      <TallDivider />
      <Rows $left={7}>
        <Row><LabelButton><WrapIcon />自动换行</LabelButton></Row>
        <Row><LabelButton><MergeIcon />合并后居中<MenuMark><Caret /></MenuMark></LabelButton></Row>
      </Rows>
    </RibbonGroup>

    <RibbonGroup name="数字" w={143} left={5} launcher>
      <Rows>
        <Row><ComboBox label="数字格式" value="常规" w={134} /></Row>
        <Row>
          <Slot $w={24} aria-label="会计数字格式"><CurrencyIcon /></Slot>
          <CaretSlot w={8} />
          <Slot $w={28}>%</Slot>
          <Slot $w={20}><Serif $size={20}>,</Serif></Slot>
          <Divider $w={8} />
          <Slot $w={24} aria-label="增加小数位数"><DecimalIcon /></Slot>
          <Slot aria-label="减少小数位数"><DecimalIcon less /></Slot>
        </Row>
      </Rows>
    </RibbonGroup>

    <RibbonGroup name="样式" w={675}>
      <Big w={62} label="条件格式" icon={<ConditionalIcon />} />
      <Big w={56} label="套用" second="表格格式" icon={<FormatTableIcon />} />
      <Gallery>
        <Chips>
          {STYLES.map(s => <Chip key={s.name} $bg={s.bg} $fg={s.fg} $kind={s.kind}>{s.name}</Chip>)}
        </Chips>
        <GallerySteps>
          <GalleryStep $dim aria-label="上一行"><Icon w={5} h={3} sharp><path d="M0 3h5L2.500 0z" fill="#ccc" /></Icon></GalleryStep>
          <GalleryStep aria-label="下一行"><Caret /></GalleryStep>
          <GalleryStep aria-label="其他"><MoreIcon color="#555" /></GalleryStep>
        </GallerySteps>
      </Gallery>
    </RibbonGroup>

    <RibbonGroup name="单元格" w={135} left={4}>
      <Big w={42} label="插入" icon={<InsertIcon />} />
      <Big w={42} label="删除" icon={<DeleteIcon />} />
      <Big w={42} label="格式" icon={<FormatIcon />} />
    </RibbonGroup>

    <RibbonGroup name="编辑" w={225} left={6}>
      <Commands $row={22} $top={2} $w={81}>
        <Command label="自动求和" icon={<Serif $size={16} $color="#000">Σ</Serif>} menu />
        <Command label="填充" icon={<FillDownIcon />} menu />
        <Command label="清除" icon={<EraserIcon />} menu />
      </Commands>
      <Big w={68} label="排序和筛选" icon={<SortIcon />} />
    </RibbonGroup>
  </Ribbon>
);

const QuickAccess = () => (
  <QuickBar>
    <Slot $w={20} aria-label="新建"><NewIcon /></Slot>
    <Slot aria-label="打开"><OpenIcon /></Slot>
    <Slot aria-label="保存"><SaveIcon /></Slot>
    <Slot aria-label="另存为"><SaveIcon pen /></Slot>
    <Slot aria-label="撤消"><UndoIcon /></Slot>
    <CaretSlot color="#000" />
    <Slot aria-label="恢复"><UndoIcon redo /></Slot>
    <CaretSlot color="#888" />
    <Slot aria-label="打印预览"><PreviewIcon /></Slot>
    <Slot aria-label="快速打印"><PrinterIcon /></Slot>
    <Slot aria-label="打印"><PagePrintIcon /></Slot>
    <CaretSlot w={8} color="#000" />
    {['inner', 'all', 'thick', 'bottom', 'thickBottom', 'double', 'none'].map(k => (
      <Slot key={k} aria-label="边框"><BorderIcon kind={k} /></Slot>
    ))}
    <Slot aria-label="删除行"><DeleteRowIcon /></Slot>
    <CaretSlot color="#000" />
    <Slot $w={24} aria-label="控件"><ChecklistIcon /></Slot>
    <Slot aria-label="裁剪"><CropGrayIcon /></Slot>
    <Slot aria-label="选择对象"><SelectIcon /></Slot>
    <Slot aria-label="粘贴"><ClipIcon mark="" /></Slot>
    <Slot aria-label="粘贴公式"><ClipIcon mark="fx" /></Slot>
    <Slot aria-label="粘贴值"><ClipIcon mark="12" /></Slot>
    <Slot aria-label="照相机"><CameraIcon /></Slot>
    <ComboBox label="图表元素" value="图表区" w={144} flat />
    <Slot aria-label="形状样式"><FillIcon dim /></Slot>
    <Slot aria-label="文件夹"><FolderIcon /></Slot>
    <Slot aria-label="签名"><SignatureIcon /></Slot>
    <Slot aria-label="字体颜色"><FontColorMark bar /></Slot>
    <CaretSlot w={12} color="#000" />
    <Slot aria-label="填充颜色"><FillIcon /></Slot>
    <CaretSlot w={12} color="#000" />
    <Slot aria-label="复制"><CopyIcon /></Slot>
    <Slot aria-label="自定义"><MoreIcon /></Slot>
  </QuickBar>
);

const SheetTable = () => (
  <Grid>
    <colgroup>
      <col style={{ width: 31 }} />
      {COLUMNS.map(c => <col key={c} style={{ width: isWide(c) ? 142 : 80 }} />)}
    </colgroup>
    <thead>
      <tr>
        <Corner aria-label="全选" />
        {COLUMNS.map(c => <ColHead key={c} scope="col">{c}</ColHead>)}
      </tr>
    </thead>
    <tbody>
      {ROWS.map(r => (
        <tr key={r}>
          <RowHead scope="row">{r}</RowHead>
          {COLUMNS.map(c => (
            <Cell key={c} $h={rowHeight(r)} $align={alignOf(c, r)}
              $fill={inTable(r) && inPanel(c)}
              $below={r >= 18 && r <= 21 && inPanel(c) ? '#fff' : '#ccc'}
              $beside={inTable(r) && (c === 'G' || inPanel(c)) ? '#fff' : '#ccc'}>
              {VALUES[c + r]}
            </Cell>
          ))}
        </tr>
      ))}
    </tbody>
  </Grid>
);

const Chart = () => (
  <ChartObject aria-label="月度支出">
    <MonthPicker>
      <MonthSelect aria-label="月份" defaultValue="6月">
        {MONTHS.map((_, i) => <option key={i}>{`${i + 1}月`}</option>)}
      </MonthSelect>
      <MonthArrow><Icon w={27} h={15}><path d="M0 0h27L13.500 15z" fill="#000" /></Icon></MonthArrow>
    </MonthPicker>
    <Plot>
      {TOTALS.map((t, i) => <Bar key={i} $solid={i + 1 === PICKED} style={{ height: Math.round(t / 25) }} />)}
    </Plot>
    <PlotLabels>{TOTALS.map((_, i) => <span key={i}>{`${i + 1}月`}</span>)}</PlotLabels>
  </ChartObject>
);

const Ime = () => (
  <ImeBar>
    <ImeLogo><SogouLogo /></ImeLogo>
    <Slot aria-label="英文"><Icon w={14} h={14}><path d="M1 13.500L6.500 1h1L13 13.500M3.500 9h7" stroke="#63c" strokeWidth="2" /></Icon></Slot>
    <Slot aria-label="半角"><Icon w={14} h={14}><path d="M8 0c5 3 6 8 3 11-3 3-8 3-11 0 5 0 9-4 8-11z" fill="#63c" /></Icon></Slot>
    <Slot aria-label="标点"><Icon w={10} h={12}><circle cx="2.500" cy="3" r="2" fill="#63c" /><path d="M6 6a2 2 0 0 1 3 1c0 2-1 4-3 4 1-1 1-2 0-5z" fill="#63c" /></Icon></Slot>
    <Slot aria-label="表情"><Icon><circle cx="8" cy="8" r="7" stroke="#63c" strokeWidth="2" /><path d="M6 4.500v3M10 4.500v3" stroke="#63c" strokeWidth="1.500" /><path d="M5 10c2 2.500 4 2.500 6 0" stroke="#63c" strokeWidth="1.500" /></Icon></Slot>
    <Slot aria-label="手写"><Icon w={14} h={14}><path d="M0 14l1-5 9-9 4 4-9 9z" fill="#63c" /><path d="M1 9l4 4" stroke="#fff" /></Icon></Slot>
    <Slot aria-label="键盘"><Icon w={16} h={14} sharp><rect x="1" y="2" width="14" height="11" fill="#fff" stroke="#63c" strokeWidth="2" /><path d="M3 5h10M4 7h10" stroke="#63c" strokeWidth="2" strokeDasharray="2 1" /><path d="M4 10h8" stroke="#63c" /></Icon></Slot>
    <Slot aria-label="截图"><Icon w={14} h={14} sharp><path d="M3 0v11h11M0 3h11v11" stroke="#63c" strokeWidth="2" /></Icon></Slot>
    <Slot $w={21}><ImeText>简</ImeText></Slot>
    <Slot aria-label="工具箱"><Icon w={14} h={14} sharp><path d="M0 0h6v6H0zM0 8h6v6H0zM8 8h6v6H8z" fill="#63c" /><rect x="8.500" y=".5" width="5" height="5" stroke="#63c" /></Icon></Slot>
  </ImeBar>
);

const NAV = ['M0 0h1v7H0zM6 0v7L2 3.500z', 'M5 0v7L1 3.500z', 'M1 0v7l4-3.500z', 'M0 0v7l4-3.500zM5 0h1v7H5z'];

export default function App() {
  return (
    <>
      <GlobalStyle />
      <Window>
        <TitleBar>
          <ExcelIcon />
          <Title>{'商务动态图（圆环+柱形）公开版  -  Microsoft Excel'}</Title>
        </TitleBar>
        <TabStrip>
          <FileTab>文件</FileTab>
          <RibbonTab $active>开始</RibbonTab>
          {TABS.map(t => <RibbonTab key={t} $latin={/[A-Z]/.test(t)}>{t}</RibbonTab>)}
        </TabStrip>
        <RibbonView />
        <RibbonEdge />
        <QuickAccess />
        <FormulaBar>
          <NameArea>
            <NameRow>
              <NameInput aria-label="名称框" defaultValue="H20" />
              <CaretSlot w={22} color="#333" />
              <FxArea><FxKnob /><FxButton>fx</FxButton></FxArea>
            </NameRow>
          </NameArea>
          <FormulaInput aria-label="编辑栏" />
        </FormulaBar>
        <SheetEdge />
        <SheetPane>
          <SheetTable />
          <Chart />
          <Pointer><Icon w={12} h={20}><path d="M1 1v15l3.500-3L7 19l2.500-1L7 12h4.500z" fill="#fff" stroke="#335" /></Icon></Pointer>
          <Ime />
        </SheetPane>
        <BottomBar>
          <SheetTabs>
            <SheetNav>
              {NAV.map(d => <NavButton key={d} aria-label="滚动工作表"><Icon w={6} h={7} sharp><path d={d} fill="#366" /></Icon></NavButton>)}
            </SheetNav>
            <SheetTab $active $w={68}>Sheet1</SheetTab>
            <SheetTab $w={69}>Sheet2</SheetTab>
            <SheetTab $w={70}>Sheet3</SheetTab>
            <NewTab aria-label="插入工作表">
              <Icon w={15} h={13}><path d="M4 4h9v5l-2 3H6l-2-2z" fill="#fff" stroke="#669" /><path d="M4 0v7M.5 3.500h7M1.500 1l5 5M6.500 1l-5 5" stroke="#f93" /></Icon>
            </NewTab>
          </SheetTabs>
          <HScroll>
            <Splitter />
            <ScrollArrow aria-label="向左滚动"><Icon w={5} h={9}><path d="M5 0v9L0 4.500z" fill="#333" /></Icon></ScrollArrow>
            <ScrollThumb><ScrollGrip /></ScrollThumb>
          </HScroll>
        </BottomBar>
        <StatusBar>
          <StatusText>就绪</StatusText>
          <StatusButton aria-label="录制宏">
            <Icon w={16} h={14}><rect x="1.500" y="1.500" width="13" height="12" fill="#fff" stroke="#669" /><rect x="2" y="2" width="12" height="3" fill="#36c" /><path d="M3 7.500h10M3 9.500h10M3 11.500h10" stroke="#99c" strokeDasharray="3 1" /><circle cx="3" cy="3" r="2.800" fill="#c33" /></Icon>
          </StatusButton>
          <StatusEnd><ViewButton aria-label="普通视图" /></StatusEnd>
        </StatusBar>
      </Window>
    </>
  );
}
